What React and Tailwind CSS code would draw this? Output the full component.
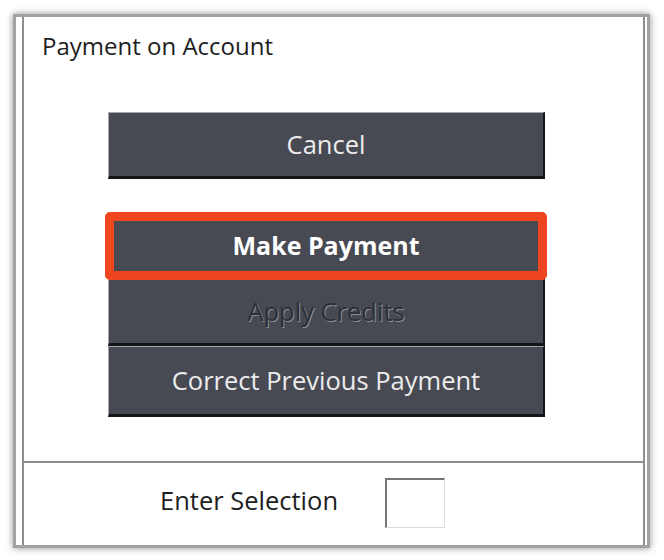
import React from 'react';

const font = { fontFamily: '"Open Sans", "Noto Sans", sans-serif' };

const MenuButton = ({ label, height, bold, disabled }) => (
  <div
    className={`w-full flex items-center justify-center bg-[#474a52] border-t border-l border-t-[#a3a5aa] border-l-[#a3a5aa] border-b-[3px] border-r-2 border-b-[#141517] border-r-[#141517] text-[25.5px] leading-none ${
      bold ? 'font-bold text-white text-[25px]' : disabled ? 'text-[#2c2f35]' : 'text-[#ececee]'
    } ${height}`}
    style={disabled ? { textShadow: '1px 1px 0 #8a8d93' } : undefined}
  >
    {label}
  </div>
);

const App = () => {
  return (
    <div className="w-[664px] h-[560px] bg-white pl-[13px] pt-[14px]" style={font}>
      <div className="w-[637px] h-[534px] bg-white border-[3px] border-[#a2a2a2] shadow-[0_0_7px_rgba(0,0,0,0.45)] pl-[6px] pr-[2px]">
        <div className="h-full flex flex-col border-x-2 border-[#8e8e8e]">
          {/* Menu */}
          <div className="flex-1 pt-[13px]">
            <h1 className="pl-[18px] text-[24px] leading-[32px] text-[#1e1e1e]">Payment on Account</h1>

            <div className="ml-[84px] w-[437px] mt-[50px] flex flex-col">
              <MenuButton label="Cancel" height="h-[67px]" />

              <div className="relative mt-[34px]">
                <MenuButton label="Make Payment" height="h-[66px]" bold />
                <div className="absolute -left-[3px] -right-[2px] -top-[1px] -bottom-[1px] border-[9px] border-[#f0461f] rounded-[5px] pointer-events-none" />
              </div>

              <MenuButton label="Apply Credits" height="h-[67px]" disabled />
              <MenuButton label="Correct Previous Payment" height="h-[71px]" />
            </div>
          </div>

          {/* Selection */}
          <div className="h-[84px] border-t-2 border-[#8e8e8e] flex items-center pb-[6px] pl-[136px]">
            <span className="w-[225px] text-[25.5px] leading-none text-[#1e1e1e]">Enter Selection</span>
            <div className="w-[60px] h-[50px] mt-[4px] bg-white border-t-2 border-l-2 border-t-[#767676] border-l-[#767676] border-r border-b border-r-[#dcdcdc] border-b-[#dcdcdc]" />
          </div>
        </div>
      </div>
    </div>
  );
};

export default App;
